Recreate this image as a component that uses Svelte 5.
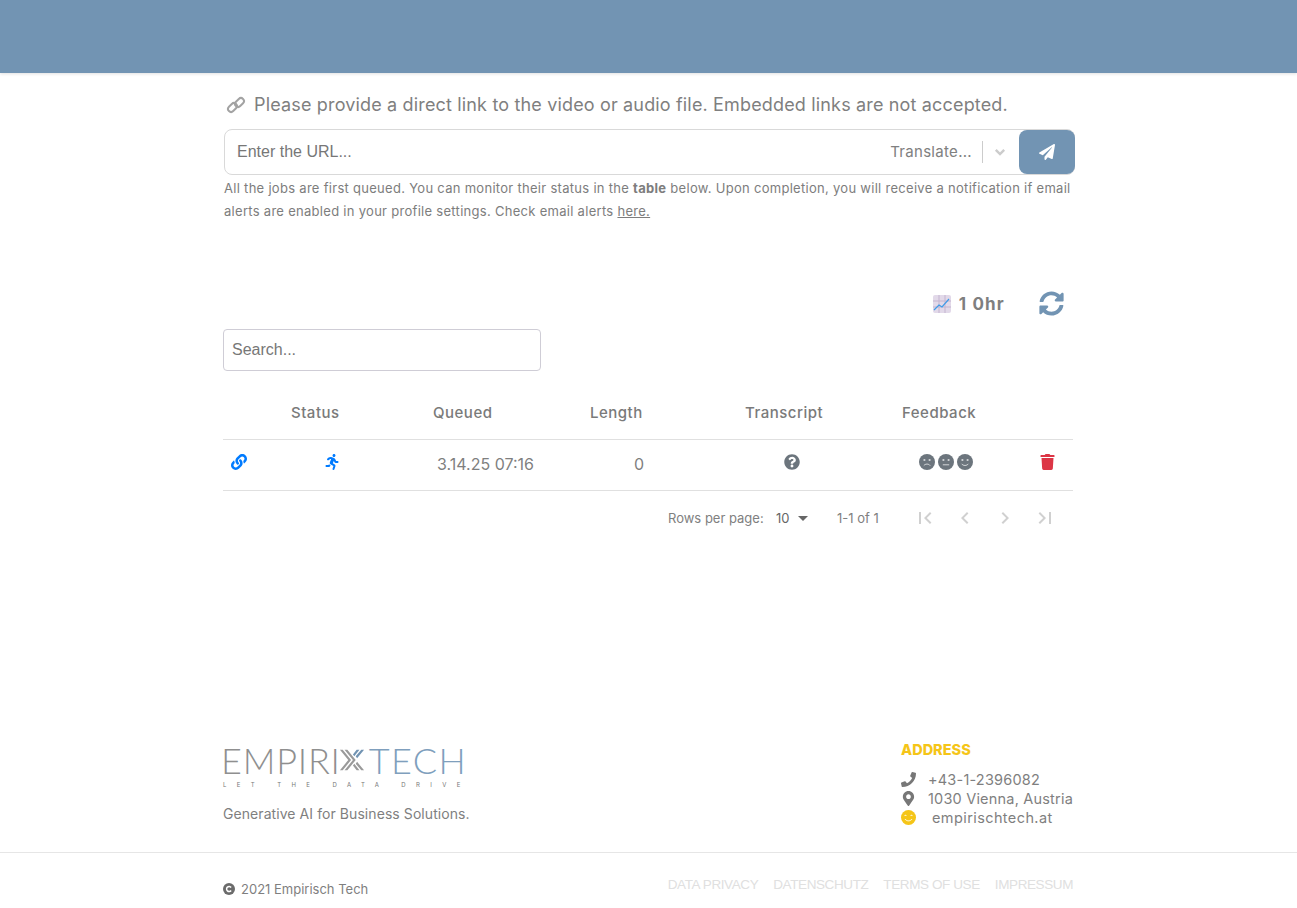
<script lang="ts">
  const columns = ['', 'Status', 'Queued', 'Length', 'Transcript', 'Feedback', ''];
  const footerLinks = ['DATA PRIVACY', 'DATENSCHUTZ', 'TERMS OF USE', 'IMPRESSUM'];
</script>

<header class="topbar"></header>

<main class="page">
  <section class="submit">
    <p class="lead">
      <svg class="lead-icon" viewBox="0 0 20 20" aria-hidden="true">
        <rect x="1.500" y="9.500" width="10" height="6" rx="3" transform="rotate(-45 6.500 12.500)" />
        <rect x="8.500" y="4.500" width="10" height="6" rx="3" transform="rotate(-45 13.500 7.500)" />
      </svg>
      Please provide a direct link to the video or audio file. Embedded links are not accepted.
    </p>

    <div class="url-box">
      <input class="url-input" placeholder="Enter the URL..." />
      <span class="translate">Translate...</span>
      <span class="divider"></span>
      <svg class="chevron" viewBox="0 0 20 20" aria-hidden="true"><path d="M4 7l6 6 6-6" /></svg>
      <button class="send" aria-label="Send">
        <svg viewBox="0 0 512 512"><path d="M476 3.2L12.5 270.6c-18.1 10.4-15.8 35.6 2.2 43.2L121 358.4l287.3-253.2c5.5-4.9 13.3 2.6 8.6 8.3L176 407v80.5c0 23.6 28.5 32.9 42.5 15.8L282 426l124.6 52.2c14.2 6 30.4-2.9 33-18.2l72-432C515 7.8 493.3-6.8 476 3.2z" /></svg>
      </button>
    </div>

    <p class="hint">
      All the jobs are first queued. You can monitor their status in the <strong>table</strong> below. Upon completion, you will receive a notification if email alerts are enabled in your profile settings. Check email alerts <a href="#here">here.</a>
    </p>
  </section>

  <section class="usage">
    <svg class="chart" viewBox="0 0 18 18" aria-hidden="true">
      <rect width="18" height="18" rx="2" fill="#e2d9e9" />
      <path d="M6 0v18M12 0v18M0 6h18M0 12h18" stroke="#c4b5d0" stroke-width="1" fill="none" />
      <path d="M1 15l5-5 3 2 7-8" stroke="#3f9be8" stroke-width="1.2" fill="none" />
    </svg>
    <span class="hours">1 0hr</span>
    <svg class="refresh" viewBox="0 0 512 512" aria-hidden="true"><path d="M370.72 133.28C339.458 104.008 298.888 87.962 255.848 88c-77.458.068-144.328 53.178-162.791 126.85-1.344 5.363-6.122 9.15-11.651 9.15H24.103c-7.498 0-13.194-6.807-11.807-14.176C33.933 94.924 134.813 8 256 8c66.448 0 126.791 26.136 171.315 68.685L463.03 40.97C478.149 25.851 504 36.559 504 57.941V192c0 13.255-10.745 24-24 24H345.941c-21.382 0-32.09-25.851-16.971-40.971l41.75-41.749zM32 296h134.059c21.382 0 32.09 25.851 16.971 40.971l-41.75 41.75c31.262 29.273 71.835 45.319 114.876 45.28 77.418-.07 144.315-53.144 162.787-126.849 1.344-5.363 6.122-9.15 11.651-9.15h57.304c7.498 0 13.194 6.807 11.807 14.176C478.067 417.076 377.187 504 256 504c-66.448 0-126.791-26.136-171.315-68.685L48.97 471.03C33.851 486.149 8 475.441 8 454.059V320c0-13.255 10.745-24 24-24z" /></svg>
  </section>

  <input class="search" placeholder="Search..." />

  <table class="jobs">
    <colgroup>
      <col style="width: 68px" />
      <col style="width: 142px" />
      <col style="width: 157px" />
      <col style="width: 155px" />
      <col style="width: 157px" />
      <col style="width: 138px" />
      <col style="width: 33px" />
    </colgroup>
    <thead>
      <tr>
        {#each columns as column}
          <th>{column}</th>
        {/each}
      </tr>
    </thead>
    <tbody>
      <tr>
        <td class="cell-link">
          <svg class="icon blue" viewBox="0 0 512 512"><path d="M326.612 185.391c59.747 59.809 58.927 155.698.36 214.59-.11.12-.24.25-.36.37l-67.2 67.2c-59.27 59.27-155.699 59.262-214.96 0-59.27-59.26-59.27-155.7 0-214.96l37.106-37.106c9.84-9.84 26.786-3.3 27.294 10.606.648 17.722 3.826 35.527 9.69 52.721 1.986 5.822.567 12.262-3.783 16.612l-13.087 13.087c-28.026 28.026-28.905 73.66-1.155 101.96 28.024 28.579 74.086 28.749 102.325.51l67.2-67.19c28.191-28.191 28.073-73.757 0-101.83-3.701-3.694-7.429-6.564-10.341-8.569a16.037 16.037 0 0 1-6.947-12.606c-.396-10.567 3.348-21.456 11.698-29.806l21.054-21.055c5.521-5.521 14.182-6.199 20.584-1.731a152.482 152.482 0 0 1 20.522 17.197zM467.547 44.449c-59.261-59.262-155.69-59.27-214.96 0l-67.2 67.2c-.12.12-.25.25-.36.37-58.566 58.892-59.387 154.781.36 214.59a152.454 152.454 0 0 0 20.521 17.196c6.402 4.468 15.064 3.789 20.584-1.731l21.054-21.055c8.35-8.35 12.094-19.239 11.698-29.806a16.037 16.037 0 0 0-6.947-12.606c-2.912-2.005-6.64-4.875-10.341-8.569-28.073-28.073-28.191-73.639 0-101.83l67.2-67.19c28.239-28.239 74.3-28.069 102.325.51 27.75 28.3 26.872 73.934-1.155 101.96l-13.087 13.087c-4.35 4.35-5.769 10.79-3.783 16.612 5.864 17.194 9.042 34.999 9.69 52.721.509 13.906 17.454 20.446 27.294 10.606l37.106-37.106c59.271-59.259 59.271-155.699.001-214.959z" /></svg>
        </td>
        <td class="cell-status">
          <svg class="icon blue" viewBox="0 0 416 512"><path d="M272 96c26.51 0 48-21.49 48-48S298.51 0 272 0s-48 21.49-48 48 21.49 48 48 48zM113.69 317.47l-14.8 34.52H32c-17.67 0-32 14.33-32 32s14.33 32 32 32h77.45c19.25 0 36.58-11.44 44.11-29.09l8.79-20.52-10.67-6.3c-17.32-10.23-30.06-25.37-37.99-42.61zM384 223.99h-44.03l-26.06-53.25c-12.5-25.55-35.45-44.23-61.78-50.94l-71.08-21.14c-28.3-6.8-57.77-.55-80.84 17.14l-39.67 30.41c-14.03 10.75-16.69 30.83-5.92 44.86s30.84 16.66 44.86 5.92l39.69-30.41c7.67-5.89 17.44-8 25.27-6.14l14.7 4.37-37.46 87.39c-12.62 29.48-1.31 64.01 26.3 80.31l84.98 50.17-27.47 87.73c-5.28 16.86 4.11 34.81 20.97 40.09 3.19 1 6.41 1.48 9.58 1.48 13.61 0 26.23-8.77 30.52-22.45l31.64-101.06c5.91-20.77-2.89-43.08-21.64-54.39l-61.24-36.14 31.31-78.28 20.27 41.43c8 16.34 24.92 26.89 43.11 26.89H384c17.67 0 32-14.33 32-32s-14.33-31.99-32-31.99z" /></svg>
        </td>
        <td class="cell-queued">3.14.25 07:16</td>
        <td class="cell-length">0</td>
        <td class="cell-transcript">
          <svg class="icon grey" viewBox="0 0 512 512"><path d="M504 256c0 136.997-111.043 248-248 248S8 392.997 8 256C8 119.083 119.043 8 256 8s248 111.083 248 248zM262.655 90c-54.497 0-89.255 22.957-116.549 63.758-3.536 5.286-2.353 12.415 2.715 16.258l34.699 26.31c5.205 3.947 12.621 3.008 16.665-2.122 17.864-22.658 30.113-35.797 57.303-35.797 20.429 0 45.698 13.148 45.698 32.958 0 14.976-12.363 22.667-32.534 33.976C247.128 238.528 216 254.941 216 296v4c0 6.627 5.373 12 12 12h56c6.627 0 12-5.373 12-12v-1.333c0-28.462 83.186-29.647 83.186-106.667 0-58.002-60.165-102-116.531-102zM256 338c-25.365 0-46 20.635-46 46 0 25.364 20.635 46 46 46s46-20.636 46-46c0-25.365-20.635-46-46-46z" /></svg>
        </td>
        <td class="cell-feedback">
          <span class="faces">
            <svg class="face" viewBox="0 0 16 16"><circle cx="8" cy="8" r="8" /><circle class="cut" cx="5.4" cy="6" r="1.1" /><circle class="cut" cx="10.6" cy="6" r="1.1" /><path class="mouth" d="M4.8 11.6c1.6-2 4.8-2 6.4 0" /></svg>
            <svg class="face" viewBox="0 0 16 16"><circle cx="8" cy="8" r="8" /><circle class="cut" cx="5.4" cy="6" r="1.1" /><circle class="cut" cx="10.6" cy="6" r="1.1" /><path class="mouth" d="M4.8 10.8h6.4" /></svg>
            <svg class="face" viewBox="0 0 16 16"><circle cx="8" cy="8" r="8" /><circle class="cut" cx="5.4" cy="6" r="1.1" /><circle class="cut" cx="10.6" cy="6" r="1.1" /><path class="mouth" d="M4.6 9.8c1.6 2.2 5.2 2.2 6.8 0" /></svg>
          </span>
        </td>
        <td class="cell-delete">
          <svg class="icon red" viewBox="0 0 448 512"><path d="M432 32H312l-9.4-18.7A24 24 0 0 0 281.1 0H166.8a23.72 23.72 0 0 0-21.4 13.3L136 32H16A16 16 0 0 0 0 48v32a16 16 0 0 0 16 16h416a16 16 0 0 0 16-16V48a16 16 0 0 0-16-16zM53.2 467a48 48 0 0 0 47.9 45h245.8a48 48 0 0 0 47.9-45L416 128H32z" /></svg>
        </td>
      </tr>
    </tbody>
  </table>

  <nav class="pager">
    <span class="pager-label">Rows per page:</span>
    <span class="pager-size">10</span>
    <span class="caret"></span>
    <span class="pager-range">1-1 of 1</span>
    <span class="pager-buttons">
      <svg viewBox="0 0 24 24"><path d="M18.41 16.59L13.82 12l4.59-4.59L17 6l-6 6 6 6zM6 6h2v12H6z" /></svg>
      <svg viewBox="0 0 24 24"><path d="M15.41 7.41L14 6l-6 6 6 6 1.41-1.41L10.83 12z" /></svg>
      <svg viewBox="0 0 24 24"><path d="M10 6L8.59 7.41 13.17 12l-4.58 4.59L10 18l6-6z" /></svg>
      <svg viewBox="0 0 24 24"><path d="M5.59 7.41L10.18 12l-4.59 4.59L7 18l6-6-6-6zM16 6h2v12h-2z" /></svg>
    </span>
  </nav>
</main>

<footer class="footer">
  <div class="footer-main">
    <div class="brand">
      <div class="logo">
        <div class="wordmark">
          <span>EMPIRI</span>
          <svg class="logo-x" viewBox="0 0 28 24" aria-hidden="true">
            <path class="x-grey" d="M1 1h3l9 11-9 11H1l9-11zM6 1h3l9 11-9 11H6l9-11z" />
            <path class="x-grey" d="M27 23h-3l-6-7 1.500-2zM22 23h-3l-4-5 1.500-2z" />
            <path class="x-blue" d="M27 1h-3l-6 7 1.500 2zM22 1h-3l-4 5 1.500 2z" />
          </svg>
          <span class="tech">TECH</span>
        </div>
        <div class="tagline">LET THE DATA DRIVE</div>
      </div>
      <p class="slogan">Generative AI for Business Solutions.</p>
    </div>

    <address class="address">
      <h4>ADDRESS</h4>
      <div class="line">
        <svg class="line-icon" viewBox="0 0 512 512"><path d="M493.4 24.6l-104-24c-11.3-2.6-22.9 3.3-27.5 13.9l-48 112c-4.2 9.8-1.4 21.3 6.9 28l60.6 49.6c-36 76.7-98.9 140.500-177.200 177.200l-49.600-60.600c-6.800-8.300-18.200-11.100-28-6.900l-112 48C3.900 366.500-2 378.100.6 389.400l24 104C27.100 504.200 36.700 512 48 512c256.100 0 464-207.500 464-464 0-11.200-7.700-20.900-18.600-23.400z" /></svg>
        <span>+43-1-2396082</span>
      </div>
      <div class="line">
        <svg class="line-icon" viewBox="0 0 384 512"><path d="M172.268 501.67C26.97 291.031 0 269.413 0 192 0 85.961 85.961 0 192 0s192 85.961 192 192c0 77.413-26.97 99.031-172.268 309.67-9.535 13.774-29.93 13.773-39.464 0zM192 272c44.183 0 80-35.817 80-80s-35.817-80-80-80-80 35.817-80 80 35.817 80 80 80z" /></svg>
        <span>1030 Vienna, Austria</span>
      </div>
      <div class="line">
        <svg class="line-icon" viewBox="0 0 16 16">
          <circle cx="8" cy="8" r="8" fill="#f5c518" />
          <path d="M3.600 6.400c.6-1 1.800-1 2.400 0M10 6.400c.6-1 1.800-1 2.400 0M4.200 9.600c1.800 2.600 5.800 2.600 7.600 0" fill="none" stroke="#fff" stroke-width="1" />
        </svg>
        <span class="site">empirischtech.at</span>
      </div>
    </address>
  </div>

  <div class="footer-bottom">
    <div class="copy">
      <svg class="copy-icon" viewBox="0 0 12 12"><circle cx="6" cy="6" r="6" fill="#6b6b6b" /><path d="M8.100 4.500a2.500 2.500 0 1 0 0 3" fill="none" stroke="#fff" stroke-width="1.500" /></svg>
      <span>2021 Empirisch Tech</span>
    </div>
    <div class="legal">
      {#each footerLinks as link}
        <a href="#legal">{link}</a>
      {/each}
    </div>
  </div>
</footer>

<style>
  :global(body) {
    margin: 0;
    background: #fff;
    font-family: Inter, 'Liberation Sans', sans-serif;
    color: #7f7f7f;
  }

  .topbar {
    height: 73px;
    background: #7294b3;
    box-shadow: 0 1px 3px rgba(0, 0, 0, 0.12);
  }

  .page {
    width: 851px;
    margin: 0 auto;
    box-sizing: border-box;
  }

  .submit {
    padding: 20px 0 0 1px;
  }

  .lead {
    display: flex;
    align-items: center;
    margin: 0 0 13px 2px;
    font-size: 18px;
    line-height: 23px;
    letter-spacing: 0.16px;
    white-space: nowrap;
  }

  .lead-icon {
    width: 20px;
    height: 20px;
    margin-right: 8px;
    fill: none;
    stroke: #a3a3a3;
    stroke-width: 2;
  }

  .url-box {
    display: flex;
    align-items: center;
    width: 851px;
    height: 46px;
    box-sizing: border-box;
    border: 1px solid #d9d9d9;
    border-radius: 8px;
  }

  .url-input {
    flex: 1;
    min-width: 0;
    padding: 0 12px;
    border: 0;
    outline: 0;
    background: transparent;
    font-family: 'Liberation Sans', sans-serif;
    font-size: 16px;
    color: #777;
  }

  .url-input::placeholder,
  .search::placeholder {
    color: #777;
    opacity: 1;
  }

  .translate {
    margin-bottom: 1px;
    font-size: 15px;
    letter-spacing: 0.3px;
    color: #808080;
  }

  .divider {
    width: 1px;
    height: 22px;
    margin: 0 10px;
    background: #ccc;
  }

  .chevron {
    width: 14px;
    height: 14px;
    margin-right: 12px;
    fill: none;
    stroke: #ccc;
    stroke-width: 3.500;
  }

  .send {
    display: flex;
    align-items: center;
    justify-content: center;
    width: 56px;
    height: 44px;
    margin-right: -1px;
    padding: 0;
    border: 0;
    border-radius: 8px;
    background: #7294b3;
  }

  .send svg {
    width: 16px;
    height: 16px;
    fill: #fff;
  }

  .hint {
    width: 851px;
    margin: 2px 0 0;
    font-size: 13px;
    line-height: 23px;
    letter-spacing: 0.29px;
    color: #7d7d7d;
  }

  .hint strong {
    font-weight: 700;
  }

  .hint a {
    color: inherit;
  }

  .usage {
    display: flex;
    align-items: center;
    justify-content: flex-end;
    height: 30px;
    margin-top: 66px;
    padding-right: 10px;
  }

  .chart {
    width: 18px;
    height: 18px;
    margin-right: 8px;
  }

  .hours {
    margin-right: 34px;
    font-size: 17px;
    font-weight: 700;
    letter-spacing: 1.2px;
  }

  .refresh {
    width: 25px;
    height: 25px;
    margin-bottom: 2px;
    fill: #7294b3;
  }

  .search {
    display: block;
    width: 318px;
    height: 42px;
    margin: 10px 0 0 0;
    padding: 0 8px;
    box-sizing: border-box;
    border: 1px solid #cfcdd6;
    border-radius: 4px;
    outline: 0;
    font-family: 'Liberation Sans', sans-serif;
    font-size: 16px;
    color: #777;
  }

  .jobs {
    width: 850px;
    margin: 20px 0 0;
    table-layout: fixed;
    border-collapse: collapse;
  }

  th {
    height: 42px;
    padding: 0 0 6px;
    border-bottom: 1px solid #e0e0e0;
    text-align: left;
    font-size: 15px;
    font-weight: 500;
    letter-spacing: 0.5px;
    color: #7a7a7a;
  }

  td {
    height: 48px;
    padding: 0 0 2px;
    border-bottom: 1px solid #e0e0e0;
    font-size: 16px;
    color: #7f7f7f;
  }

  .icon {
    display: block;
    width: 16px;
    height: 16px;
    margin-top: -5px;
  }

  .blue {
    fill: #007bff;
  }

  .grey {
    fill: #6c757d;
  }

  .red {
    fill: #dc3545;
  }

  .cell-link {
    padding-left: 8px;
  }

  .cell-status {
    padding-left: 33px;
  }

  .cell-queued {
    padding-left: 4px;
  }

  .cell-length {
    padding-left: 44px;
  }

  .cell-transcript {
    padding-left: 39px;
  }

  .cell-feedback {
    padding-left: 17px;
  }

  .cell-delete svg {
    width: 15px;
  }

  .faces {
    display: flex;
    gap: 3px;
    margin-top: -5px;
  }

  .face {
    width: 16px;
    height: 16px;
    fill: #6c757d;
  }

  .cut {
    fill: #fff;
    opacity: 0.7;
  }

  .mouth {
    fill: none;
    stroke: #fff;
    stroke-opacity: 0.7;
    stroke-width: 1;
  }

  .pager {
    display: flex;
    align-items: center;
    height: 54px;
    margin-left: 445px;
    font-size: 13px;
    color: #808080;
  }

  .pager-label {
    width: 108px;
  }

  .pager-size {
    width: 22px;
    color: #666;
  }

  .caret {
    width: 0;
    height: 0;
    border-left: 5px solid transparent;
    border-right: 5px solid transparent;
    border-top: 5px solid #666;
    margin-right: 29px;
  }

  .pager-range {
    width: 76px;
  }

  .pager-buttons {
    display: flex;
    gap: 16px;
  }

  .pager-buttons svg {
    width: 24px;
    height: 24px;
    fill: #d0d0d0;
  }

  .footer {
    margin-top: 196px;
  }

  .footer-main {
    display: flex;
    justify-content: space-between;
    width: 851px;
    height: 111px;
    margin: 0 auto;
    padding-right: 1px;
    box-sizing: border-box;
  }

  .brand {
    padding-top: 4px;
  }

  .wordmark {
    display: flex;
    align-items: center;
    height: 30px;
    margin-left: -2px;
    font-family: Lato, sans-serif;
    font-size: 36px;
    font-weight: 300;
    line-height: 30px;
    letter-spacing: 0.8px;
    color: #8f8f8f;
  }

  .logo-x {
    width: 26px;
    height: 24px;
    margin: 0 4px 0 -2px;
  }

  .x-grey {
    fill: #9a9a9a;
  }

  .x-blue {
    fill: #7294b3;
  }

  .tech {
    letter-spacing: 1.4px;
    color: #7f9fbd;
  }

  .tagline {
    margin-top: 6px;
    font-size: 6px;
    line-height: 8px;
    letter-spacing: 10.4px;
    white-space: nowrap;
    color: #777;
  }

  .slogan {
    margin: 16px 0 0;
    font-size: 14px;
    line-height: 18px;
    letter-spacing: 0.07px;
  }

  .address {
    width: 172px;
    font-style: normal;
    font-size: 14.500px;
    letter-spacing: 0.2px;
    color: #7f7f7f;
  }

  .address h4 {
    margin: 0 0 11px;
    font-size: 14.500px;
    line-height: 18px;
    font-weight: 800;
    letter-spacing: 0;
    color: #f5c518;
  }

  .line {
    display: flex;
    align-items: center;
    height: 19px;
    white-space: nowrap;
  }

  .line-icon {
    width: 15px;
    height: 15px;
    margin-right: 12px;
    fill: #777;
  }

  .site {
    margin-left: 4px;
    letter-spacing: 0.4px;
  }

  .footer-bottom {
    display: flex;
    justify-content: space-between;
    align-items: flex-start;
    height: 55px;
    padding: 0 224px 0 223px;
    border-top: 1px solid #e6e6e6;
  }

  .copy {
    display: flex;
    align-items: center;
    gap: 6px;
    margin-top: 28px;
    font-size: 13px;
    line-height: 16px;
  }

  .copy-icon {
    width: 12px;
    height: 12px;
  }

  .legal {
    display: flex;
    gap: 15px;
    margin-top: 24px;
    font-family: 'Liberation Sans', sans-serif;
    font-size: 13.500px;
    line-height: 16px;
    letter-spacing: -0.4px;
  }

  .legal a {
    color: #e0e0e0;
    text-decoration: none;
  }
</style>
